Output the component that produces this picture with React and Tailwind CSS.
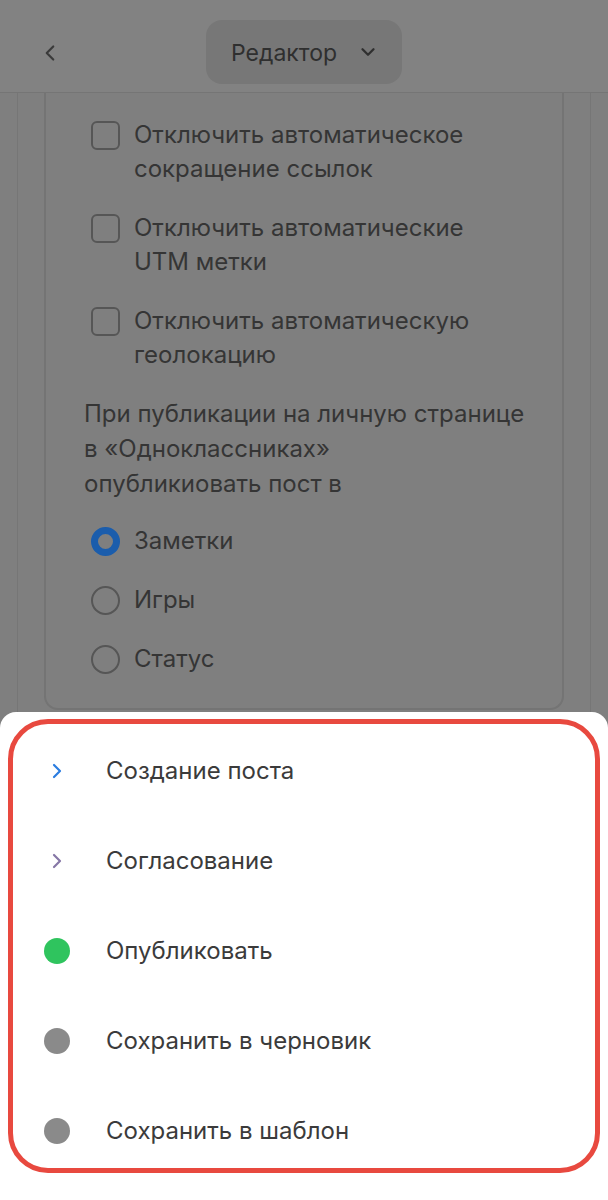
import React from 'react';
import { ChevronLeft, ChevronDown, ChevronRight } from 'lucide-react';

const Checkbox = ({ label }) => (
    <div className="flex items-start gap-[14px] pl-[7px]">
        <span className="mt-[3px] w-[29px] h-[29px] shrink-0 rounded-[6px] border-[2.5px] border-[#565656]"></span>
        <span className="leading-[34px]">{label}</span>
    </div>
);

const Radio = ({ label, checked }) => (
    <div className="flex items-center gap-[14px] pl-[7px] h-[34px]">
        {checked ? (
            <span className="w-[29px] h-[29px] shrink-0 rounded-full border-[7px] border-[#1b5dac]"></span>
        ) : (
            <span className="w-[29px] h-[29px] shrink-0 rounded-full border-[2.5px] border-[#565656]"></span>
        )}
        <span>{label}</span>
    </div>
);

const actions = [
    { label: 'Создание поста', icon: 'chevron', color: '#2b7de0' },
    { label: 'Согласование', icon: 'chevron', color: '#8677a6' },
    { label: 'Опубликовать', icon: 'dot', color: '#2fc45e' },
    { label: 'Сохранить в черновик', icon: 'dot', color: '#8a8a8a' },
    { label: 'Сохранить в шаблон', icon: 'dot', color: '#8a8a8a' },
];

export default function App() {
    return (
        <div className="w-[608px] h-[1200px] bg-[#7f7f7f] overflow-hidden flex flex-col text-[24px] text-[#353535]" style={{ fontFamily: 'Inter, Roboto, sans-serif' }}>
            {/* header */}
            <div className="h-[93px] shrink-0 bg-[#828282] border-b border-[#757575] flex items-center justify-center relative">
                <ChevronLeft className="absolute left-[37px] top-[40px]" size={26} strokeWidth={2} color="#3a3a3a" />
                <div className="w-[196px] h-[64px] mt-[12px] rounded-[16px] bg-[#777777] flex items-center pl-[25px] gap-[20px]">
                    <span className="text-[23px] text-[#2f2f2f] pt-[2px]">Редактор</span>
                    <ChevronDown size={22} strokeWidth={2.5} color="#2f2f2f" />
                </div>
            </div>

            {/* dimmed content */}
            <div className="h-[619px] shrink-0 pl-[17px] pr-[17px]">
                <div className="h-full border-x border-[#767676] px-[26px]">
                    <div className="h-[617px] border-2 border-t-0 border-[#747474] rounded-b-[14px] pl-[38px] pt-[25px] flex flex-col">
                        <div className="flex flex-col gap-[25px]">
                            <Checkbox label={<>Отключить автоматическое<br />сокращение ссылок</>} />
                            <Checkbox label={<>Отключить автоматические<br />UTM метки</>} />
                            <Checkbox label={<>Отключить автоматическую<br />геолокацию</>} />
                        </div>
                        <p className="mt-[24px] leading-[35px]">
                            При публикации на личную странице<br />
                            в «Одноклассниках»<br />
                            опубликиовать пост в
                        </p>
                        <div className="mt-[23px] flex flex-col gap-[25px]">
                            <Radio label="Заметки" checked />
                            <Radio label="Игры" />
                            <Radio label="Статус" />
                        </div>
                    </div>
                </div>
            </div>

            {/* bottom sheet */}
            <div className="flex-1 bg-white rounded-t-[16px] px-[8px] pt-[7px]">
                <div className="h-[454px] border-[5px] border-[#e8493f] rounded-[40px] pt-[24px] pl-[31px] flex flex-col gap-[44px]">
                    {actions.map((a) => (
                        <div key={a.label} className="h-[46px] flex items-center gap-[36px]">
                            <span className="w-[26px] h-[26px] flex items-center justify-center shrink-0">
                                {a.icon === 'chevron' ? (
                                    <ChevronRight size={24} strokeWidth={2.2} color={a.color} />
                                ) : (
                                    <span className="w-[26px] h-[26px] rounded-full" style={{ backgroundColor: a.color }}></span>
                                )}
                            </span>
                            <span className="text-[#3b3b3b]">{a.label}</span>
                        </div>
                    ))}
                </div>
            </div>
        </div>
    );
}
